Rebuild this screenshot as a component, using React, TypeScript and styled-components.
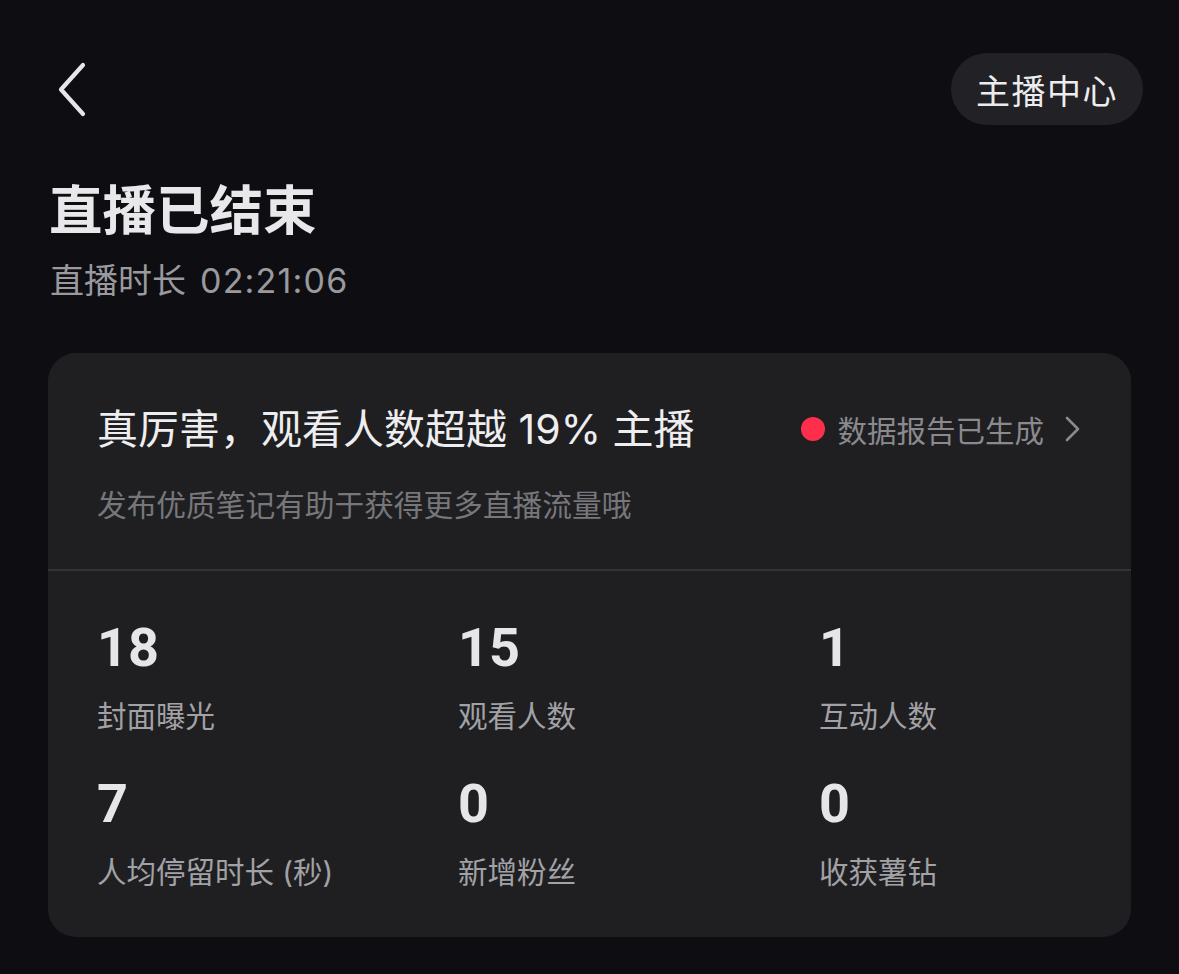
import styled, { createGlobalStyle } from "styled-components";

const Global = createGlobalStyle`
  html, body {
    margin: 0;
    padding: 0;
    background: #0e0e12;
  }
  body {
    font-family: Inter, "Noto Sans CJK SC", sans-serif;
    color: #e6e6e8;
  }
`;

const Page = styled.div`
  width: 1179px;
  min-height: 974px;
  box-sizing: border-box;
  padding: 53px 48px 0 48px;
  background: #0e0e12;
`;

const TopBar = styled.div`
  display: flex;
  align-items: center;
  justify-content: space-between;
  height: 72px;
  margin-right: -12px;
`;

const BackButton = styled.button`
  display: flex;
  align-items: center;
  justify-content: center;
  width: 48px;
  height: 60px;
  padding: 0;
  background: none;
  border: none;
  cursor: pointer;
`;

const CenterButton = styled.button`
  height: 72px;
  padding: 0 25px;
  border: none;
  border-radius: 36px;
  background: #222226;
  color: #ececee;
  font-family: "Noto Sans CJK SC", sans-serif;
  font-size: 34px;
  letter-spacing: 1.5px;
  cursor: pointer;
`;

const Title = styled.h1`
  margin: 51px 0 0 1px;
  font-family: "Noto Sans CJK SC", sans-serif;
  font-size: 53.5px;
  line-height: 62px;
  font-weight: 700;
  color: #e8e8ea;
`;

const Duration = styled.div`
  margin: 23px 0 0 2px;
  font-size: 34px;
  line-height: 40px;
  color: #9a9a9e;
`;

const Time = styled.span`
  margin-left: 14px;
  letter-spacing: 1.2px;
`;

const Card = styled.section`
  margin-top: 52px;
  border-radius: 28px;
  background: #1f1f22;
  overflow: hidden;
`;

const CardHead = styled.div`
  padding: 54px 49px 47px 49px;
  border-bottom: 2px solid #333337;
`;

const HeadRow = styled.div`
  display: flex;
  align-items: center;
  justify-content: space-between;
`;

const Headline = styled.div`
  font-size: 41px;
  line-height: 44px;
  color: #eeeef0;
`;

const ReportLink = styled.div`
  display: flex;
  align-items: center;
  gap: 12px;
  font-family: "Noto Sans CJK SC", sans-serif;
  font-size: 29.5px;
  line-height: 36px;
  color: #8a8a8e;

  svg {
    margin-left: 6px;
  }
`;

const Dot = styled.span`
  width: 24px;
  height: 24px;
  border-radius: 50%;
  background: #ff2e4d;
`;

const Hint = styled.div`
  margin-top: 35px;
  font-family: "Noto Sans CJK SC", sans-serif;
  font-size: 29.7px;
  line-height: 36px;
  color: #77777b;
`;

const StatsGrid = styled.div`
  display: grid;
  grid-template-columns: repeat(3, 1fr);
  row-gap: 42px;
  padding: 49px 0 47px 0;
`;

const Stat = styled.div`
  padding-left: 49px;
`;

const Value = styled.div`
  font-family: Roboto, sans-serif;
  font-size: 54px;
  line-height: 56px;
  font-weight: 700;
  color: #e6e6e8;
`;

const Label = styled.div`
  margin-top: 22px;
  font-family: Inter, "Noto Sans CJK SC", sans-serif;
  font-size: 29.5px;
  line-height: 36px;
  color: #a2a2a6;
`;

const stats = [
  { value: "18", label: "封面曝光" },
  { value: "15", label: "观看人数" },
  { value: "1", label: "互动人数" },
  { value: "7", label: "人均停留时长 (秒)" },
  { value: "0", label: "新增粉丝" },
  { value: "0", label: "收获薯钻" },
];

export default function App() {
  return (
    <Page>
      <Global />
      <TopBar>
        <BackButton aria-label="返回">
          <svg width="34" height="58" viewBox="0 0 34 58" fill="none">
            <path
              d="M28 5 L6 29.5 L28 54"
              stroke="#e6e6e8"
              strokeWidth="4.2"
              strokeLinecap="round"
              strokeLinejoin="round"
            />
          </svg>
        </BackButton>
        <CenterButton>主播中心</CenterButton>
      </TopBar>

      <Title>直播已结束</Title>
      <Duration>
        直播时长<Time>02:21:06</Time>
      </Duration>

      <Card>
        <CardHead>
          <HeadRow>
            <Headline>真厉害，观看人数超越 19% 主播</Headline>
            <ReportLink>
              <Dot />
              数据报告已生成
              <svg width="20" height="28" viewBox="0 0 20 28" fill="none">
                <path
                  d="M5 3 L16 14 L5 25"
                  stroke="#8a8a8e"
                  strokeWidth="2.6"
                  strokeLinecap="round"
                  strokeLinejoin="round"
                />
              </svg>
            </ReportLink>
          </HeadRow>
          <Hint>发布优质笔记有助于获得更多直播流量哦</Hint>
        </CardHead>
        <StatsGrid>
          {stats.map((s, i) => (
            <Stat key={i}>
              <Value>{s.value}</Value>
              <Label>{s.label}</Label>
            </Stat>
          ))}
        </StatsGrid>
      </Card>
    </Page>
  );
}
